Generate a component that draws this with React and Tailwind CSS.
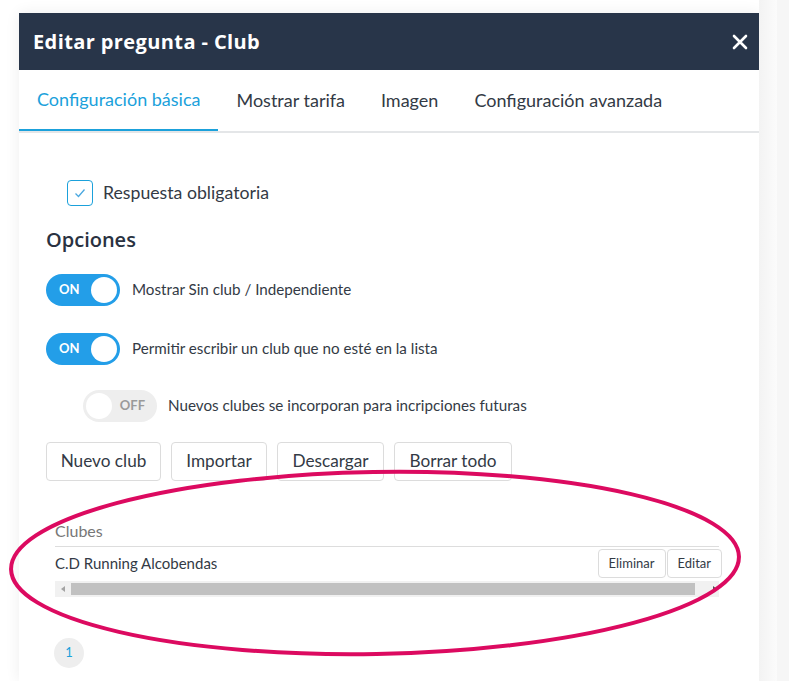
import React from 'react'

function Toggle({ on }) {
    if (on) {
        return (
            <div className="flex items-center justify-between w-[74px] h-[32px] rounded-full bg-[#239ee8] pl-[13px] pr-[3px] shrink-0">
                <span className="text-white text-[13px] font-bold">ON</span>
                <span className="w-[26px] h-[26px] rounded-full bg-white"></span>
            </div>
        )
    }
    return (
        <div className="flex items-center justify-between w-[74px] h-[32px] rounded-full bg-[#eeeeee] pl-[3px] pr-[12px] shrink-0">
            <span className="w-[26px] h-[26px] rounded-full bg-white"></span>
            <span className="text-[#9a9a9a] text-[13px] font-bold">OFF</span>
        </div>
    )
}

function App() {
    const tabs = ['Configuración básica', 'Mostrar tarifa', 'Imagen', 'Configuración avanzada']
    const buttons = [
        { label: 'Nuevo club', w: 'w-[115px]' },
        { label: 'Importar', w: 'w-[96px]' },
        { label: 'Descargar', w: 'w-[107px]' },
        { label: 'Borrar todo', w: 'w-[118px]' },
    ]

    return (
        <div className="relative flex h-[681px] w-full overflow-hidden bg-white font-['Lato','Open_Sans',sans-serif] text-[#333a45]">
            <div className="ml-[19px] mt-[13px] w-[740px] shrink-0 bg-white shadow-[0_0_14px_rgba(0,0,0,0.07)]">
                {/* header */}
                <div className="flex items-center justify-between h-[57px] bg-[#283549] pl-[14px] pr-[11px]">
                    <h1 className="text-white text-[20px] font-bold tracking-[0.4px] font-['Open_Sans',sans-serif]">Editar pregunta - Club</h1>
                    <svg width="16" height="16" viewBox="0 0 16 16" fill="none" stroke="white" strokeWidth="2.6" strokeLinecap="round">
                        <path d="M2 2L14 14M14 2L2 14" />
                    </svg>
                </div>

                {/* tabs */}
                <div className="flex border-b-2 border-[#e4e6e8]">
                    {tabs.map((t, i) => (
                        <div
                            key={t}
                            className={
                                i === 0
                                    ? 'px-[18px] h-[61px] flex items-center text-[18px] text-[#1ba1db] border-b-2 border-[#1ba1db] -mb-[2px]'
                                    : 'px-[18px] h-[61px] flex items-center text-[18px] text-[#333a45]'
                            }
                        >
                            {t}
                        </div>
                    ))}
                </div>

                <div className="px-[27px]">
                    {/* checkbox */}
                    <div className="flex items-center gap-[10px] ml-[21px] mt-[47px]">
                        <div className="flex items-center justify-center w-[26px] h-[26px] rounded-[4px] border border-[#1ba1db]">
                            <svg width="12" height="10" viewBox="0 0 12 10" fill="none" stroke="#4aa8e0" strokeWidth="1.3">
                                <path d="M1.5 5.5L4.5 8.5L10.5 1.5" />
                            </svg>
                        </div>
                        <span className="text-[17.7px]">Respuesta obligatoria</span>
                    </div>

                    <h2 className="mt-[19px] text-[20px] leading-[28px] font-semibold font-['Open_Sans',sans-serif] text-[#2a3241]">Opciones</h2>

                    <div className="flex items-center gap-[12px] mt-[20px]">
                        <Toggle on />
                        <span className="text-[15.2px]">Mostrar Sin club / Independiente</span>
                    </div>

                    <div className="flex items-center gap-[12px] mt-[27px]">
                        <Toggle on />
                        <span className="text-[15.2px]">Permitir escribir un club que no esté en la lista</span>
                    </div>

                    <div className="flex items-center gap-[11px] mt-[25px] ml-[37px]">
                        <Toggle />
                        <span className="text-[15.2px]">Nuevos clubes se incorporan para incripciones futuras</span>
                    </div>

                    <div className="flex gap-[10px] mt-[20px]">
                        {buttons.map((b) => (
                            <button key={b.label} className={`${b.w} h-[39px] flex items-center justify-center rounded-[4px] border border-[#dcdcdc] bg-white text-[17.2px] text-[#333a45]`}>
                                {b.label}
                            </button>
                        ))}
                    </div>

                    {/* table */}
                    <div className="ml-[9px] mr-[13px] mt-[40px]">
                        <div className="text-[16px] leading-[20px] text-[#777777] pb-[5px] border-b border-[#dddddd]">Clubes</div>
                        <div className="flex items-center justify-between h-[34px]">
                            <span className="text-[15px]">C.D Running Alcobendas</span>
                            <div className="flex gap-[1px] -mr-[3px]">
                                <button className="h-[29px] px-[10px] rounded-[4px] border border-[#dcdcdc] bg-white text-[13px]">Eliminar</button>
                                <button className="h-[29px] px-[10px] rounded-[4px] border border-[#dcdcdc] bg-white text-[13px]">Editar</button>
                            </div>
                        </div>
                        <div className="flex items-center h-[16px] bg-[#f1f1f1]">
                            <div className="w-[16px] flex items-center justify-center">
                                <svg width="4" height="6" viewBox="0 0 4 6"><path d="M4 0L0 3L4 6Z" fill="#a3a3a3" /></svg>
                            </div>
                            <div className="h-[12px] w-[624px] bg-[#c1c1c1]"></div>
                            <div className="flex-1 flex items-center justify-end pr-[2px]">
                                <svg width="4" height="6" viewBox="0 0 4 6"><path d="M0 0L4 3L0 6Z" fill="#505050" /></svg>
                            </div>
                        </div>
                    </div>

                    {/* pagination */}
                    <div className="flex items-center justify-center mt-[41px] ml-[8px] w-[30px] h-[30px] rounded-full bg-[#eeeeee] text-[13px] text-[#1ba1db]">1</div>
                </div>
            </div>

            <div className="w-[18px] shrink-0 bg-gradient-to-r from-[#f3f3f3] to-[#fbfbfb]"></div>
            <div className="flex-1 bg-[#f6f6f6]"></div>

            {/* annotation */}
            <svg className="absolute left-0 top-0 pointer-events-none" width="789" height="681" viewBox="0 0 789 681" fill="none">
                <ellipse cx="375" cy="563" rx="364" ry="91" stroke="#dc0a60" strokeWidth="4" transform="rotate(-1 375 563)" />
            </svg>
        </div>
    )
}

export default App
